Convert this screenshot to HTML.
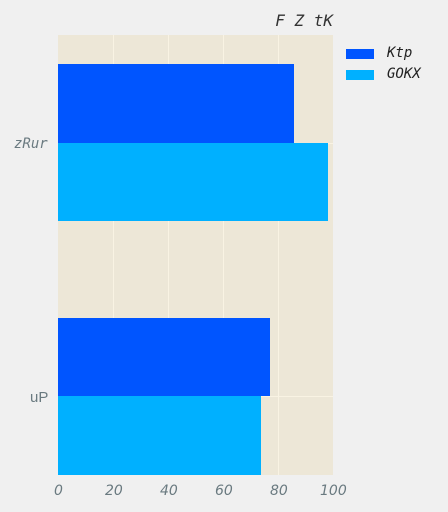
<!DOCTYPE html>
<html><head><style>
body{margin:0;width:448px;height:512px;background:#f0f0f0;position:relative;overflow:hidden;font-family:"DejaVu Sans","Liberation Sans",sans-serif;}
.a{position:absolute}
.m{font-family:"DejaVu Sans Mono","Liberation Mono",monospace;font-style:italic}
.t{color:#6a7a80;font-size:14px}
</style></head><body>
<svg class="a" style="left:0;top:0" width="448" height="512">
<rect x="58" y="35" width="275" height="440" fill="#ede7d7"/>
<g stroke="#f9f3e3" stroke-width="1">
<line x1="113.5" y1="35" x2="113.5" y2="475"/><line x1="168.5" y1="35" x2="168.5" y2="475"/>
<line x1="223.5" y1="35" x2="223.5" y2="475"/><line x1="278.5" y1="35" x2="278.5" y2="475"/>
<line x1="58" y1="143.5" x2="333" y2="143.5"/><line x1="58" y1="396.5" x2="333" y2="396.5"/>
</g>
<rect x="58" y="64" width="236" height="79" fill="#0055ff"/>
<rect x="58" y="143" width="270" height="78" fill="#00b0ff"/>
<rect x="58" y="318" width="212" height="78" fill="#0055ff"/>
<rect x="58" y="396" width="203" height="79" fill="#00b0ff"/>
<rect x="346" y="49" width="28" height="10" fill="#0055ff"/>
<rect x="346" y="70" width="28" height="10" fill="#00b0ff"/>
</svg>
<div class="a m" style="right:115px;top:11px;font-size:16px;color:#333">F Z tK</div>
<div class="a m" style="left:387px;top:45px;font-size:14px;color:#222">Ktp</div>
<div class="a m" style="left:387px;top:66px;font-size:14px;color:#222">GOKX</div>
<div class="a m t" style="left:14px;top:136px">zRur</div>
<div class="a t" style="left:30px;top:389px;font-family:'Liberation Sans',sans-serif;font-size:15px">uP</div>
<div class="a t" style="top:483px;left:0;width:448px;font-style:italic">
<span class="a" style="left:54px">0</span><span class="a" style="left:105px">20</span><span class="a" style="left:160px">40</span><span class="a" style="left:215px">60</span><span class="a" style="left:270px">80</span><span class="a" style="left:320px">100</span>
</div>
</body></html>
